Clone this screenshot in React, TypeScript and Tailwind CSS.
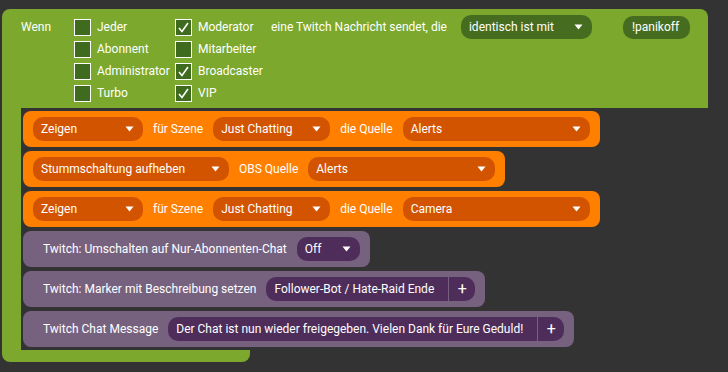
import React from "react";

const font = { fontFamily: "Roboto, 'Noto Sans', sans-serif" };

const Arrow = () => (
  <svg width="9" height="6" viewBox="0 0 9 6" className="shrink-0">
    <path d="M0.5 0.5 L8.5 0.5 L4.5 5.5 Z" fill="#ffffff" />
  </svg>
);

const Dropdown: React.FC<{ label: string; width: string; bg: string }> = ({ label, width, bg }) => (
  <div className={`flex items-center justify-between h-[24px] rounded-[10px] pl-[8px] pr-[9px] shrink-0 ${width} ${bg}`}>
    <span>{label}</span>
    <Arrow />
  </div>
);

const Check: React.FC<{ checked?: boolean; label: string }> = ({ checked, label }) => (
  <div className="flex items-center h-[22px] gap-[6px]">
    <div className="w-[17px] h-[17px] border border-white bg-[#3f6b1e] flex items-center justify-center">
      {checked && (
        <svg width="13" height="13" viewBox="0 0 13 13">
          <path d="M2 7 L5 10.5 L11 2" stroke="#ffffff" strokeWidth="1.6" fill="none" />
        </svg>
      )}
    </div>
    <span>{label}</span>
  </div>
);

const Orange: React.FC<{ children: React.ReactNode }> = ({ children }) => (
  <div className="flex items-center gap-[10px] h-[36px] rounded-[8px] bg-[#ff7f00] pl-[10px] pr-[10px] w-fit">
    {children}
  </div>
);

const Purple: React.FC<{ children: React.ReactNode }> = ({ children }) => (
  <div className="flex items-center gap-[10px] h-[36px] rounded-[8px] bg-[#76627f] pl-[20px] pr-[10px] w-fit">
    {children}
  </div>
);

const TextField: React.FC<{ text: string }> = ({ text }) => (
  <div className="flex items-center h-[24px] rounded-[10px] bg-[#4e2d5a]">
    <span className="pl-[8px] pr-[14px]">{text}</span>
    <div className="w-px h-full bg-[#76627f]" />
    <span className="w-[26px] text-center text-[16px] leading-none">+</span>
  </div>
);

export default function App() {
  return (
    <div className="w-[728px] h-[372px] bg-[#333333] text-white text-[12px] pt-[9px] pl-[2px]" style={font}>
      {/* top green section */}
      <div className="w-[706px] h-[99px] bg-[#7ba82d] rounded-t-[8px] pt-[7px] pl-[19px] flex items-start">
        <div className="w-[53px] h-[22px] flex items-center">Wenn</div>
        <div className="grid grid-cols-[101px_96px]">
          <Check label="Jeder" />
          <Check checked label="Moderator" />
          <Check label="Abonnent" />
          <Check label="Mitarbeiter" />
          <Check label="Administrator" />
          <Check checked label="Broadcaster" />
          <Check label="Turbo" />
          <Check checked label="VIP" />
        </div>
        <div className="h-[22px] flex items-center">eine Twitch Nachricht sendet, die</div>
        <div className="ml-[14px] h-[22px] flex items-center">
          <Dropdown label="identisch ist mit" width="w-[131px]" bg="bg-[#466d1f]" />
        </div>
        <div className="ml-[31px] h-[22px] flex items-center">
          <div className="h-[23px] rounded-[10px] bg-[#466d1f] w-[67px] flex items-center pl-[9px]">!panikoff</div>
        </div>
      </div>

      {/* middle */}
      <div className="flex">
        <div className="w-[19px] bg-[#7ba82d]" />
        <div className="flex flex-col gap-[4px] pt-[3px] pb-[3px] pl-[2px]">
          <Orange>
            <Dropdown label="Zeigen" width="w-[110px]" bg="bg-[#d35400]" />
            <span>für Szene</span>
            <Dropdown label="Just Chatting" width="w-[117px]" bg="bg-[#d35400]" />
            <span>die Quelle</span>
            <Dropdown label="Alerts" width="w-[187px]" bg="bg-[#d35400]" />
          </Orange>
          <Orange>
            <Dropdown label="Stummschaltung aufheben" width="w-[196px]" bg="bg-[#d35400]" />
            <span>OBS Quelle</span>
            <Dropdown label="Alerts" width="w-[187px]" bg="bg-[#d35400]" />
          </Orange>
          <Orange>
            <Dropdown label="Zeigen" width="w-[110px]" bg="bg-[#d35400]" />
            <span>für Szene</span>
            <Dropdown label="Just Chatting" width="w-[117px]" bg="bg-[#d35400]" />
            <span>die Quelle</span>
            <Dropdown label="Camera" width="w-[187px]" bg="bg-[#d35400]" />
          </Orange>
          <Purple>
            <span>Twitch: Umschalten auf Nur-Abonnenten-Chat</span>
            <Dropdown label="Off" width="w-[63px]" bg="bg-[#4e2d5a]" />
          </Purple>
          <Purple>
            <span>Twitch: Marker mit Beschreibung setzen</span>
            <TextField text="Follower-Bot / Hate-Raid Ende" />
          </Purple>
          <Purple>
            <span>Twitch Chat Message</span>
            <TextField text="Der Chat ist nun wieder freigegeben. Vielen Dank für Eure Geduld!" />
          </Purple>
        </div>
      </div>

      {/* bottom green bar */}
      <div className="w-[248px] h-[12px] bg-[#7ba82d] rounded-b-[8px]" />
    </div>
  );
}
